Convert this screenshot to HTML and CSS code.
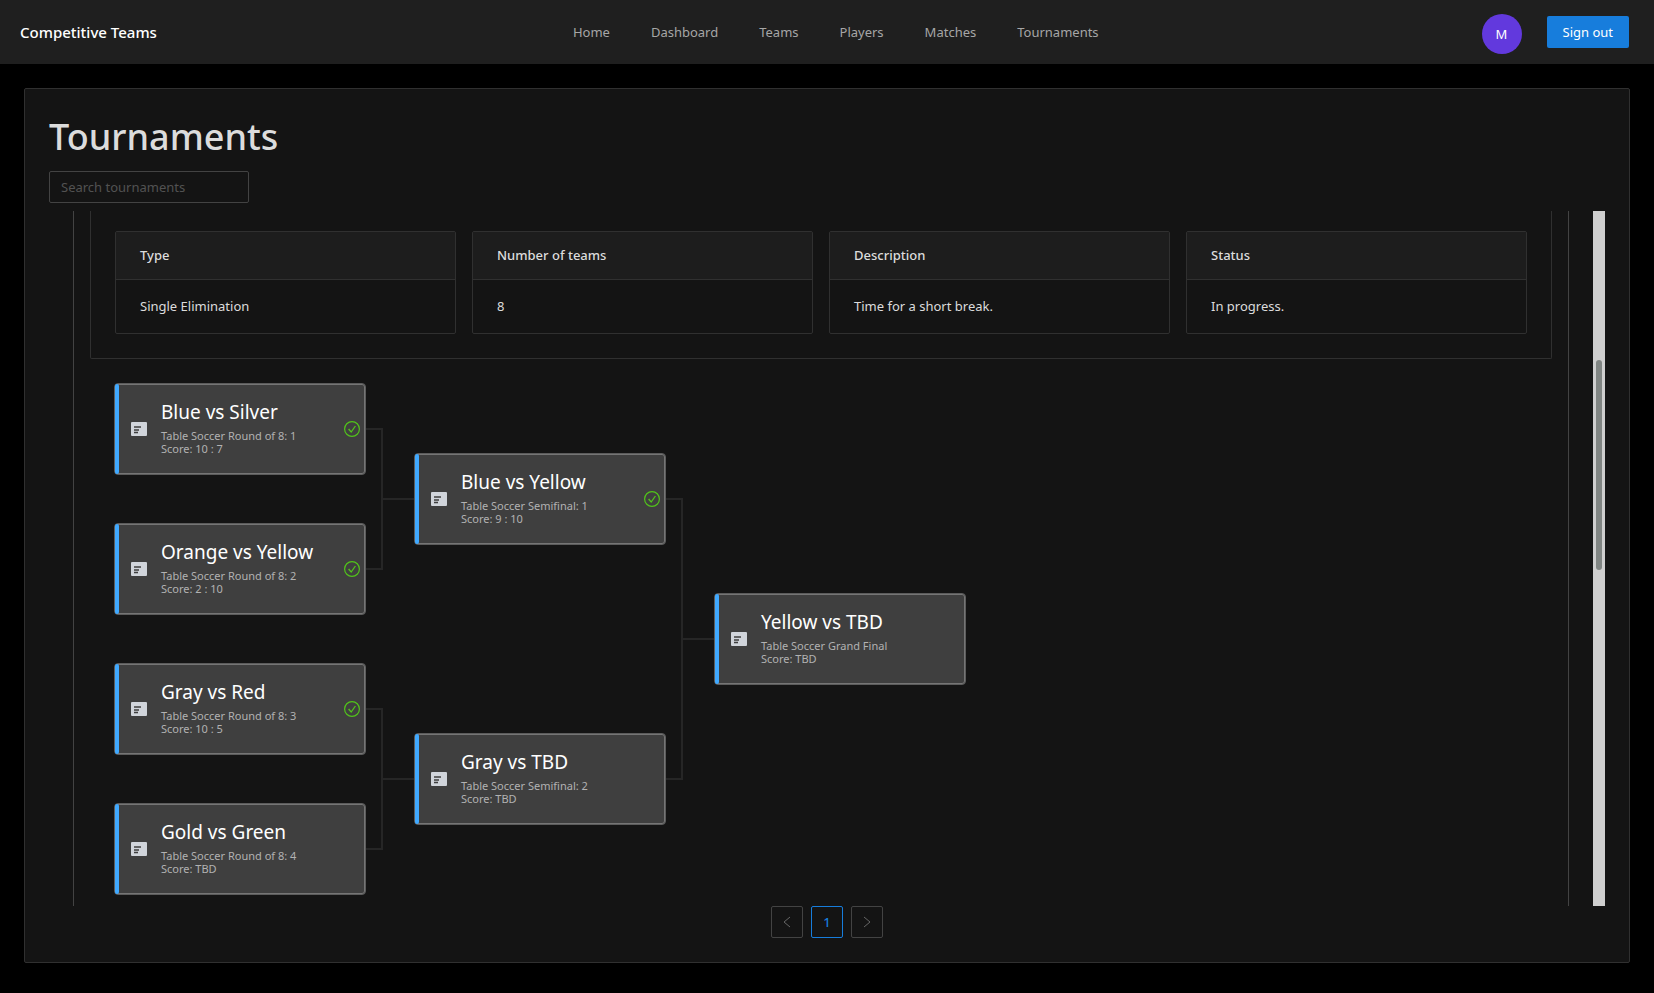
FILE: index.html
```html
<!DOCTYPE html>
<html lang="en">
<head>
<meta charset="utf-8">
<title>Competitive Teams</title>
<link rel="stylesheet" href="styles.css">
</head>
<body>
<svg class="defs" aria-hidden="true">
  <symbol id="icon-match" viewBox="0 0 16 14">
    <rect width="16" height="14" rx="1" fill="#d1d5db"/>
    <path d="M3 5h7M3 8h5M3 10.500h4" stroke="#3f3f3f" stroke-width="1.300"/>
  </symbol>
  <symbol id="icon-done" viewBox="0 0 16 16">
    <circle cx="8" cy="8" r="7.400" fill="none" stroke="#52c41a" stroke-width="1.200"/>
    <path d="M4.600 8l2.600 3 4.200-6" fill="none" stroke="#52c41a" stroke-width="1.300"/>
  </symbol>
</svg>
<header class="topbar">
  <div class="brand">Competitive Teams</div>
  <nav class="menu">
    <a href="#">Home</a>
    <a href="#">Dashboard</a>
    <a href="#">Teams</a>
    <a href="#">Players</a>
    <a href="#">Matches</a>
    <a href="#">Tournaments</a>
  </nav>
  <div class="account">
    <span class="avatar">M</span>
    <button class="sign-out" type="button">Sign out</button>
  </div>
</header>
<main class="page-card">
  <h1 class="title">Tournaments</h1>
  <input class="search" type="text" placeholder="Search tournaments" aria-label="Search tournaments">
  <div class="viewport">
    <div class="panel">
      <div class="summary">
        <section class="info"><h2>Type</h2><p>Single Elimination</p></section>
        <section class="info"><h2>Number of teams</h2><p>8</p></section>
        <section class="info"><h2>Description</h2><p>Time for a short break.</p></section>
        <section class="info"><h2>Status</h2><p>In progress.</p></section>
      </div>
      <div class="bracket">
        <svg class="links" width="804" height="560" viewBox="0 0 804 560" aria-hidden="true">
          <path d="M252 70h16v140h-16M268 140h32M252 350h16v140h-16M268 420h32M552 140h16v280h-16M568 280h32"/>
        </svg>
        <div class="round">
          <div class="slot"><article class="match">
            <svg class="kind"><use href="#icon-match"/></svg>
            <div class="text"><h3>Blue vs Silver</h3><p>Table Soccer Round of 8: 1<br>Score: 10 : 7</p></div>
            <svg class="done"><use href="#icon-done"/></svg>
          </article></div>
          <div class="slot"><article class="match">
            <svg class="kind"><use href="#icon-match"/></svg>
            <div class="text"><h3>Orange vs Yellow</h3><p>Table Soccer Round of 8: 2<br>Score: 2 : 10</p></div>
            <svg class="done"><use href="#icon-done"/></svg>
          </article></div>
          <div class="slot"><article class="match">
            <svg class="kind"><use href="#icon-match"/></svg>
            <div class="text"><h3>Gray vs Red</h3><p>Table Soccer Round of 8: 3<br>Score: 10 : 5</p></div>
            <svg class="done"><use href="#icon-done"/></svg>
          </article></div>
          <div class="slot"><article class="match">
            <svg class="kind"><use href="#icon-match"/></svg>
            <div class="text"><h3>Gold vs Green</h3><p>Table Soccer Round of 8: 4<br>Score: TBD</p></div>
          </article></div>
        </div>
        <div class="round">
          <div class="slot"><article class="match">
            <svg class="kind"><use href="#icon-match"/></svg>
            <div class="text"><h3>Blue vs Yellow</h3><p>Table Soccer Semifinal: 1<br>Score: 9 : 10</p></div>
            <svg class="done"><use href="#icon-done"/></svg>
          </article></div>
          <div class="slot"><article class="match">
            <svg class="kind"><use href="#icon-match"/></svg>
            <div class="text"><h3>Gray vs TBD</h3><p>Table Soccer Semifinal: 2<br>Score: TBD</p></div>
          </article></div>
        </div>
        <div class="round">
          <div class="slot"><article class="match">
            <svg class="kind"><use href="#icon-match"/></svg>
            <div class="text"><h3>Yellow vs TBD</h3><p>Table Soccer Grand Final<br>Score: TBD</p></div>
          </article></div>
        </div>
      </div>
    </div>
    <div class="track"><div class="thumb"></div></div>
  </div>
  <nav class="pagination" aria-label="Pages">
    <button type="button" aria-label="Previous page" disabled><svg width="8" height="12" viewBox="0 0 8 12"><path d="M7 1L1 6l6 5"/></svg></button>
    <button type="button" class="current" aria-current="page">1</button>
    <button type="button" aria-label="Next page" disabled><svg width="8" height="12" viewBox="0 0 8 12"><path d="M1 1l6 5-6 5"/></svg></button>
  </nav>
</main>
</body>
</html>
```
FILE: styles.css
```css
* { box-sizing: border-box; }
body {
  margin: 0;
  background: #000;
  color: #dcdcdc;
  font: 13px/22px "Noto Sans", "Open Sans", sans-serif;
}
h1, h2, h3, p { margin: 0; font-weight: 400; }
button, input { font: inherit; }
.defs { position: absolute; width: 0; height: 0; }

.topbar {
  display: flex;
  align-items: center;
  height: 64px;
  padding: 0 25px 0 20px;
  background: #1f1f1f;
}
.brand { flex: 0 0 170px; color: #fff; font-size: 15px; font-weight: 500; }
.menu { display: flex; flex: 1; justify-content: center; gap: 41px; }
.menu a { color: #a6a6a6; text-decoration: none; }
.account { display: flex; align-items: center; gap: 25px; }
.avatar {
  width: 40px;
  height: 40px;
  margin-top: 4px;
  border-radius: 50%;
  background: #6239dd;
  color: #fff;
  line-height: 40px;
  text-align: center;
}
.sign-out {
  height: 32px;
  padding: 0 16px;
  border: 0;
  border-radius: 2px;
  background: #177ddc;
  color: #fff;
}

.page-card {
  margin: 24px 24px 0;
  padding: 24px;
  border: 1px solid #303030;
  border-radius: 2px;
  background: #141414;
}
.title { margin-bottom: 11px; font-size: 36px; font-weight: 500; line-height: 47px; }
.search {
  display: block;
  width: 200px;
  height: 32px;
  padding: 4px 11px;
  border: 1px solid #434343;
  border-radius: 2px;
  background: transparent;
  color: #dcdcdc;
}
.search::placeholder { color: #525252; opacity: 1; }

.viewport { display: flex; gap: 24px; height: 70vh; margin-top: 8px; padding-left: 24px; overflow: hidden; }
.panel { flex: 1; height: 100%; padding: 0 16px; border: solid #434343; border-width: 0 1px; overflow: hidden; }
.track { display: flex; flex: 0 0 12px; flex-direction: column; align-items: center; background: #cfcfcf; }
.thumb { width: 6px; height: 30.2%; margin-top: 149px; border-radius: 3px; background: #808583; }

.summary {
  display: grid;
  grid-template-columns: repeat(4, 1fr);
  gap: 16px;
  padding: 20px 24px 24px;
  border: 1px solid #303030;
  border-top: 0;
  border-radius: 0 0 2px 2px;
}
.info { border: 1px solid #303030; border-radius: 2px; }
.info h2 {
  padding: 12px 24px 13px;
  border-bottom: 1px solid #303030;
  background: #1d1d1d;
  font-size: 13px;
  font-weight: 500;
}
.info p { padding: 15px 24px 16px; }

.bracket { position: relative; display: flex; gap: 48px; width: 852px; padding-left: 24px; }
.links { position: absolute; top: 0; left: 24px; fill: none; stroke: #262626; stroke-width: 2; }
.round { display: flex; flex: 0 0 252px; flex-direction: column; }
.slot { display: flex; flex: 1; align-items: center; padding: 24px 0; }
.match {
  position: relative;
  display: flex;
  flex: 1;
  align-items: center;
  height: 92px;
  padding: 0 5px 0 16px;
  border: 1px solid #5c5c5c;
  border-radius: 4px;
  background: #3f3f3f;
  box-shadow: inset 0 0 0 1px #757575;
}
.match::before {
  content: "";
  position: absolute;
  top: 0;
  bottom: 0;
  left: 0;
  width: 4px;
  border-radius: 2px;
  background: #40a9ff;
}
.kind { flex: none; width: 16px; height: 14px; margin-right: 14px; }
.done { flex: none; width: 16px; height: 16px; }
.text { flex: 1; padding-bottom: 4px; color: #b2b2b2; font-size: 11px; line-height: 13px; white-space: nowrap; }
.text h3 { margin-bottom: 4px; color: #fff; font-size: 19px; line-height: 26px; }

.pagination { display: flex; justify-content: center; gap: 8px; }
.pagination button {
  display: flex;
  align-items: center;
  justify-content: center;
  width: 32px;
  height: 32px;
  padding: 0;
  border: 1px solid #434343;
  border-radius: 2px;
  background: transparent;
}
.pagination svg { fill: none; stroke: #666; }
.pagination .current { border-color: #177ddc; color: #177ddc; font-weight: 500; }
```
